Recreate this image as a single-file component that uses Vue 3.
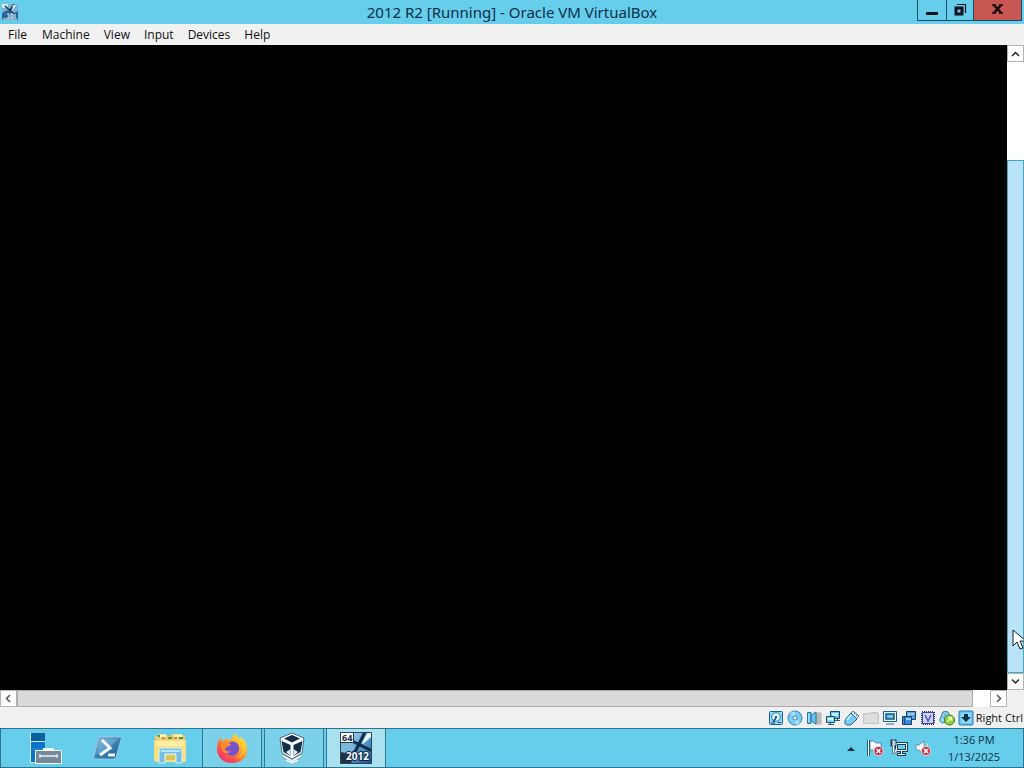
<script setup>
const menus = ['File', 'Machine', 'View', 'Input', 'Devices', 'Help']
const indicators = [
  { id: 'disk', label: 'Hard disks' },
  { id: 'optical', label: 'Optical drives' },
  { id: 'audio', label: 'Audio' },
  { id: 'network', label: 'Network' },
  { id: 'usb', label: 'USB devices' },
  { id: 'folder', label: 'Shared folders' },
  { id: 'display', label: 'Display' },
  { id: 'windows', label: 'Recording' },
  { id: 'cpu', label: 'Processor' },
  { id: 'mouse', label: 'Mouse integration' },
  { id: 'key', label: 'Keyboard capture' }
]
const apps = [
  { id: 'server', label: 'Server Manager', state: '' },
  { id: 'shell', label: 'Windows PowerShell', state: '' },
  { id: 'files', label: 'File Explorer', state: '' },
  { id: 'firefox', label: 'Firefox', state: 'open' },
  { id: 'vbox', label: 'Oracle VM VirtualBox', state: 'open' },
  { id: 'vm', label: '2012 R2 [Running]', state: 'active' }
]
</script>

<template>
  <div class="desktop">
    <header class="titlebar">
      <svg class="app-icon" viewBox="0 0 16 16" aria-hidden="true">
        <rect width="16" height="16" fill="#7fb2d2" />
        <path d="M0 16V9l5-3 5 4 6-3v9z" fill="#2a689c" />
        <path d="M0 0h6v4H0z" fill="#d5e7f2" />
        <path d="M3 2l9 8M12 0L7 8" stroke="#17385f" stroke-width="1.6" />
        <path d="M11 1l3 0-4 6" fill="#dff1fa" />
        <path d="M5 10h2v4H5m4-4h2v4H9zM13 10v4M1 15h14" fill="none" stroke="#e8f2f8" />
      </svg>
      <h1 class="title">2012 R2 [Running] - Oracle VM VirtualBox</h1>
      <div class="controls">
        <button class="control" aria-label="Minimize">
          <svg width="14" height="14" viewBox="0 0 14 14"><path d="M1 9h12v3H1z" fill="#06121c" /></svg>
        </button>
        <button class="control restore" aria-label="Restore">
          <svg width="14" height="14" viewBox="0 0 14 14">
            <path d="M4 1.500h8.500V10" fill="none" stroke="#06121c" stroke-width="1.200" />
            <path d="M3 5h6v6H3z" fill="none" stroke="#06121c" stroke-width="3" />
          </svg>
        </button>
        <button class="control close" aria-label="Close">
          <svg width="14" height="14" viewBox="0 0 14 14">
            <path d="M3 2l7 8M10 2l-7 8" stroke="#16090c" stroke-width="2.600" />
            <path d="M1 2h4M8 2h4M1 10h4M8 10h4" stroke="#16090c" stroke-width="1.500" />
          </svg>
        </button>
      </div>
    </header>

    <nav class="menubar">
      <button v-for="m in menus" :key="m" class="menu">{{ m }}</button>
    </nav>

    <main class="viewer">
      <div class="screen"></div>
      <div class="vscroll">
        <button class="arrow" aria-label="Scroll up">
          <svg width="9" height="7" viewBox="0 0 9 7"><path d="M1 6L4.500 2.500 8 6" /></svg>
        </button>
        <div class="vtrack"><div class="vthumb"></div></div>
        <button class="arrow" aria-label="Scroll down">
          <svg width="9" height="7" viewBox="0 0 9 7"><path d="M1 1.500L4.500 5 8 1.500" /></svg>
        </button>
        <svg class="pointer" width="14" height="22" viewBox="0 0 14 22" aria-hidden="true">
          <path d="M1 1v16l4-4 3 7 3-1-3-7h6z" fill="#fff" stroke="#17222b" />
        </svg>
      </div>
    </main>

    <div class="hscroll">
      <button class="arrow" aria-label="Scroll left">
        <svg width="7" height="9" viewBox="0 0 7 9"><path d="M5 1L1.500 4.500 5 8" /></svg>
      </button>
      <div class="htrack"><div class="hthumb"></div></div>
      <button class="arrow" aria-label="Scroll right">
        <svg width="7" height="9" viewBox="0 0 7 9"><path d="M2 1l3.500 3.500L2 8" /></svg>
      </button>
    </div>

    <footer class="statusbar">
      <svg v-for="i in indicators" :key="i.id" class="indicator" viewBox="0 0 16 16" role="img" :aria-label="i.label">
        <g v-if="i.id === 'disk'">
          <rect x="1.500" y="1.500" width="13" height="13" rx="1" fill="#8fd6f8" stroke="#21618c" />
          <circle cx="8" cy="7" r="4.300" fill="#e8f8ff" stroke="#277cae" />
          <circle cx="8" cy="7" r="1.300" fill="#1e6c9b" />
          <path d="M8 8l-3 4" stroke="#194d71" stroke-width="1.500" />
          <path d="M3 13h4M10 12.500h3" stroke="#194d71" />
        </g>
        <g v-else-if="i.id === 'optical'">
          <circle cx="8" cy="8" r="7" fill="#7ccdf6" stroke="#2b82b8" />
          <path d="M8 8L3 3a7 7 0 0 1 5-1.500zM8 8l5 5a7 7 0 0 1-5 1.500z" fill="#a5e0fb" />
          <circle cx="8" cy="8" r="2" fill="#f1fbff" stroke="#3a8abb" />
        </g>
        <g v-else-if="i.id === 'audio'">
          <path d="M9 3h6v11H9z" fill="#d4d4d2" stroke="#aaa" />
          <path d="M11 4v9M13 4v9" stroke="#9a9a9a" />
          <path d="M1.500 2.500H5v11H1.500zM5 5l5-3v12l-5-3z" fill="#69c4ef" stroke="#2577a9" />
          <path d="M3 4v8" stroke="#c9f1ff" />
        </g>
        <g v-else-if="i.id === 'network'">
          <path d="M5.500 1.500h9v7h-9z" fill="#5fc1ef" stroke="#174a70" />
          <path d="M7 3h6v3H7z" fill="#c2efff" />
          <path d="M10 10.500h5M12.500 9v2" stroke="#28557a" fill="none" />
          <path d="M1.500 6.500h8v6h-8z" fill="#82d6f7" stroke="#174a70" />
          <path d="M3 8h5v2H3z" fill="#e0f8ff" />
          <path d="M3 14.500h6M5.500 13v2" stroke="#28557a" />
        </g>
        <g v-else-if="i.id === 'usb'">
          <path d="M9 1l6 5-3 3-6-5z" fill="#dceef5" stroke="#55738a" />
          <path d="M7 3l6 6-5 5c-2 1.500-5 1.500-6.500 0s-.5-4 1-6z" fill="#78caf2" stroke="#25648e" />
          <path d="M7 5l-4 5" stroke="#d2f4ff" stroke-width="1.500" />
          <path d="M10 3l1 1M12 5l1 1" stroke="#426b86" />
        </g>
        <g v-else-if="i.id === 'folder'">
          <path d="M.5 3.500h6l1-1h7l1 1v10H.5z" fill="#d9d9d9" stroke="#c4c4c4" />
          <path d="M2 5h12v7H2z" fill="#dedede" />
        </g>
        <g v-else-if="i.id === 'display'">
          <path d="M1.500 1.500h13v10h-13z" fill="#e9f9ff" stroke="#1b5f8b" />
          <path d="M4 4h8v5H4z" fill="#64c7f7" stroke="#175279" stroke-width="1.500" />
          <path d="M4 14h8" stroke="#3e6f90" />
        </g>
        <g v-else-if="i.id === 'windows'">
          <path d="M5.500 1.500h9v8h-9z" fill="#58a2df" stroke="#183d7b" />
          <path d="M7 3h2v3H7zM10 3h3v2h-3z" fill="#a6d4f7" />
          <path d="M1.500 6.500h9v8h-9z" fill="#3b8cd8" stroke="#163e80" />
          <path d="M5 8h5v2H5z" fill="#91cff7" />
          <path d="M3.500 6v8" stroke="#1e4a8c" />
        </g>
        <g v-else-if="i.id === 'cpu'">
          <path d="M2 2h12v12H2z" fill="none" stroke="#312d86" stroke-width="2" stroke-dasharray="1 1" />
          <path d="M2.500 2.500h11v11h-11z" fill="#ced4fb" stroke="#4744a0" />
          <path d="M5 5l3 6 3-6" fill="none" stroke="#5655b8" stroke-width="1.500" />
        </g>
        <g v-else-if="i.id === 'mouse'">
          <path d="M4 2c4-2 7 1 6 4l-3 6c-3 2-7 0-6-3z" fill="#94d8f4" stroke="#2b7196" />
          <path d="M3 7l5 2M7 2L5 7" stroke="#5aa5c8" />
          <circle cx="10.500" cy="10" r="5" fill="#8fd142" stroke="#397d26" />
          <path d="M8 12l4-4M9 7.500h3.500V11" stroke="#efffb0" fill="none" stroke-width="1.500" />
        </g>
        <g v-else>
          <rect x="1" y="1" width="14" height="14" rx="1" fill="#70c6f2" stroke="#277baa" />
          <path d="M3 3h10v10H3z" fill="#8ed9fa" />
          <path d="M6 4h4v3h3l-5 5-5-5h3z" fill="#10364f" />
        </g>
      </svg>
      <span class="hostkey">Right Ctrl</span>
    </footer>

    <div class="taskbar">
      <div class="apps">
        <button v-for="a in apps" :key="a.id" class="task" :class="a.state" :aria-label="a.label">
          <svg v-if="a.id === 'server'" class="task-icon" viewBox="0 0 32 32">
            <path d="M1 1h14v29H1z" fill="#0c74c4" />
            <path d="M1 1h14v8H1z" fill="#0d5f9c" />
            <path d="M1 9.500h14" stroke="#c8effa" />
            <path d="M1 17h14" stroke="#2794cf" />
            <path d="M.5 1v29.500h4" fill="none" stroke="#c5edf9" />
            <path d="M14 19v-2h9v2" fill="none" stroke="#edfaff" stroke-width="2" />
            <path d="M5.500 18.500h26v13h-26z" fill="#75899a" stroke="#f0faff" />
            <path d="M9 24h19" stroke="#e9f5fa" stroke-width="1.500" />
            <path d="M10 22v4M27 22v4" stroke="#e9f5fa" />
          </svg>
          <svg v-else-if="a.id === 'shell'" class="task-icon" viewBox="0 0 32 32">
            <defs><linearGradient id="shell" y2="1"><stop stop-color="#82b9df" /><stop offset=".5" stop-color="#3b84b5" /><stop offset="1" stop-color="#1c5690" /></linearGradient></defs>
            <path d="M7 5h21c1 0 2 1 1 3l-5 17c0 1-1 2-3 2H4c-2 0-3-1-2-3L6 7c0-1 0-2 1-2z" fill="url(#shell)" stroke="#9cc9e3" />
            <path d="M7 7h19L13 21l-8 1z" fill="#9ec8e1" opacity=".35" />
            <path d="M10 8l8 8-10 7M16 23h7" fill="none" stroke="#f1fbff" stroke-width="3" />
          </svg>
          <svg v-else-if="a.id === 'files'" class="task-icon" viewBox="0 0 32 32">
            <path d="M1 4h3V2h9v2h4V2h12v2h2v24H1z" fill="#e6cc72" />
            <path d="M6 4h6M20 4h8" stroke="#fff8ba" stroke-width="3" />
            <path d="M4 4h2M14 6h4M25 6h4" stroke="#538e45" stroke-width="2" />
            <path d="M8 6h3M20 6h3" stroke="#df8845" stroke-width="2" />
            <path d="M0 8h32v20c0 2-1 2-3 2H3c-2 0-3-1-3-3z" fill="#f6df83" />
            <path d="M2 9h28v5H2z" fill="#fdeea2" />
            <path d="M5 31V19c0-2 1-3 3-3h17c2 0 3 1 3 3v12h-6v-9H11v9z" fill="#75bfe3" stroke="#d8f5fd" />
            <path d="M7 19h19" stroke="#b8e7f7" stroke-width="2" />
            <path d="M12 23h9v5h-9z" fill="#dbc55f" />
          </svg>
          <svg v-else-if="a.id === 'firefox'" class="task-icon" viewBox="0 0 32 32">
            <defs><linearGradient id="fox" x1="1" x2=".2" y2="1"><stop stop-color="#fff14e" /><stop offset=".35" stop-color="#ffbd29" /><stop offset=".65" stop-color="#ff7439" /><stop offset="1" stop-color="#ed2371" /></linearGradient></defs>
            <path d="M5 5l1 5 5-4 2 3c3-2 4-6 6-8 1 3 3 4 5 6l1-2c5 4 6 8 6 13 0 8-6 13-15 13S1 25 1 17c0-5 1-9 4-12z" fill="url(#fox)" />
            <path d="M4 10c-2 7-1 14 6 18 5 3 11 2 15-1-8 3-15 0-17-6-1-3 0-5 2-6z" fill="#ff4260" opacity=".75" />
            <path d="M12 11c6-4 12 0 11 7-1 5-8 8-12 4-3-3-2-6 0-8l4-1z" fill="#7652cb" />
            <path d="M5 10c4-2 8 0 10 3-3 0-3 3-7 3 1 3 4 4 7 3-2 3-7 3-9-1-2-3-2-5-1-8z" fill="#ff8d2c" />
            <path d="M19 1c1 6 9 8 8 17-1 4-3 7-7 8 10-1 12-13 5-19l-1 2c-1-3-4-4-5-8z" fill="#ffd23c" />
          </svg>
          <svg v-else-if="a.id === 'vbox'" class="task-icon" viewBox="0 0 32 32">
            <path d="M4 24l10-3 10 3v2l-10 6-10-6z" fill="#8fa6b6" />
            <path d="M5 24l9 5 9-5M8 28l6 3 6-3" fill="none" stroke="#f1fafe" stroke-width="1.500" />
            <path d="M2 6l12-5 12 5-2 15-10 6-10-6z" fill="#f5fbfd" stroke="#4f6b82" />
            <path d="M6 6.500L14 3l8 3.500-8 4z" fill="#152c45" />
            <path d="M3.500 9l9 4v11L5.500 20zM24.500 9l-9 4v11l7-4z" fill="#152c45" />
            <path d="M8 20l4.500-3v7zM20 20l-4.500-3v7z" fill="#d9e8f0" />
          </svg>
          <svg v-else class="task-icon" viewBox="0 0 32 32">
            <defs><linearGradient id="vm" y2="1"><stop stop-color="#d5ecf6" /><stop offset=".5" stop-color="#5aa3d6" /><stop offset="1" stop-color="#134c86" /></linearGradient></defs>
            <rect width="32" height="32" fill="url(#vm)" />
            <path d="M0 20c6 0 10 4 12 12H0z" fill="#22303f" />
            <path d="M0 11h11l6 7-5 6-6-5-6-1z" fill="#7cb8dd" />
            <path d="M12 9l20 10M25 0l-9 18-6 6" fill="none" stroke="#122c46" stroke-width="3" />
            <path d="M28 0h3v5l-8 7-1-1z" fill="#e6f5fb" />
            <path d="M.5 .5h13v10H.5z" fill="#fff" stroke="#253846" />
            <text x="2" y="9" class="bits">64</text>
            <text x="6" y="28" class="release">2012</text>
            <path d="M.5 .5h31v31H.5z" fill="none" stroke="#2b455a" />
          </svg>
        </button>
      </div>

      <div class="tray">
        <button class="tray-button" aria-label="Show hidden icons">
          <svg width="8" height="5" viewBox="0 0 8 5"><path d="M0 5l4-4 4 4z" fill="#0b2c41" /></svg>
        </button>
        <button class="tray-button" aria-label="Action Center">
          <svg width="18" height="18" viewBox="0 0 18 18">
            <path d="M2.500 1v16" stroke="#163b5b" stroke-width="2.500" />
            <path d="M2.500 1v16" stroke="#eefaff" />
            <path d="M4 2h4l2 2h5v7H4z" fill="#f4fcff" stroke="#29536c" stroke-width=".6" />
            <circle cx="12.500" cy="12" r="4.600" fill="#c82b3b" stroke="#f6d4d7" />
            <path d="M10.500 10l4 4M14.500 10l-4 4" stroke="#fff" stroke-width="1.700" />
          </svg>
        </button>
        <button class="tray-button" aria-label="Network">
          <svg width="18" height="18" viewBox="0 0 18 18">
            <path d="M6.500 4.500h10v7h-10z" fill="#6acceb" stroke="#183d61" stroke-width="3" />
            <path d="M11.500 12v3M7 15.500h9" fill="none" stroke="#183d61" stroke-width="3" />
            <path d="M6.500 4.500h10v7h-10zM11.500 12v3M8 15.500h7" fill="none" stroke="#f3fcff" />
            <path d="M1.500 1.500h4v5h-4zM3.500 7v7h4" fill="#c8eefa" stroke="#183d61" stroke-width="2" />
            <path d="M2 2h3v4H2M3.500 6v8h4" fill="none" stroke="#fff" />
          </svg>
        </button>
        <button class="tray-button" aria-label="Volume muted">
          <svg width="18" height="18" viewBox="0 0 18 18">
            <path d="M2 6h3l5-4v13l-5-4H2z" fill="#f3fcff" stroke="#55717f" stroke-width=".7" />
            <path d="M12 4c2 2 2 4 1 6" fill="none" stroke="#e2f7fc" />
            <circle cx="12" cy="12" r="4.600" fill="#ca3541" stroke="#f4ccd0" />
            <path d="M10 10l4 4M14 10l-4 4" stroke="#fff" stroke-width="1.700" />
          </svg>
        </button>
        <button class="clock"><span>1:36 PM</span><span>1/13/2025</span></button>
      </div>
    </div>
  </div>
</template>

<style>
body { margin: 0; }
</style>

<style scoped>
.desktop {
  display: flex;
  flex-direction: column;
  height: 100vh;
  overflow: hidden;
  background: #f0f0f0;
  color: #101010;
  font: 12px/16px "Noto Sans", "Open Sans", sans-serif;
}
button { margin: 0; padding: 0; border: 0; background: none; color: inherit; font: inherit; }
svg { display: block; flex: none; }
.titlebar {
  display: grid;
  grid-template-columns: 107px 1fr 107px;
  align-items: start;
  height: 24px;
  flex: none;
  background: #66cdeb;
}
.app-icon { width: 16px; height: 16px; margin: 4px 2px; }
.title { margin: 0; color: #092f48; font: 15px/24px "Noto Sans", sans-serif; text-align: center; white-space: nowrap; }
.controls { display: flex; height: 20px; border: 1px solid #174c65; border-top: 0; margin-right: 2px; }
.control { display: grid; place-items: center; width: 28px; }
.restore { border: solid #174c65; border-width: 0 1px; }
.close { flex: 1; background: #c75750; }
.menubar { display: flex; flex: none; height: 21px; background: #f2f1f1; }
.menu { padding: 0 6px 0 8px; font: 12px/21px "Open Sans", sans-serif; }
.menu:first-child { padding-right: 7px; }
.viewer { display: flex; flex: 1; min-height: 0; }
.screen { flex: 1; background: #000; }
.vscroll { position: relative; display: flex; flex-direction: column; width: 17px; background: #fff; }
.arrow { display: grid; place-items: center; flex: none; width: 17px; height: 17px; border: 1px solid #b4b4b4; background: #fff; }
.arrow path { fill: none; stroke: #252525; stroke-width: 1.500; }
.hscroll .arrow path { stroke: #555; }
.vtrack { display: flex; flex: 1; align-items: flex-end; }
.vthumb { width: 100%; height: 84%; box-sizing: border-box; border: 1px solid #42a7bd; background: #b9e3f8; }
.pointer { position: absolute; left: 5px; bottom: 39px; }
.hscroll { display: flex; flex: none; width: calc(100% - 17px); height: 17px; background: #fff; }
.htrack { flex: 1; padding-right: 17px; }
.hthumb { height: 17px; box-sizing: border-box; border: 1px solid #a9a9a9; background: #dadada; }
.statusbar { display: flex; align-items: center; justify-content: flex-end; gap: 3px; flex: none; height: 21px; padding-right: 1px; }
.indicator { width: 16px; height: 16px; }
.hostkey { margin-left: -1px; font: 11px/20px "Open Sans", sans-serif; white-space: nowrap; }
.taskbar { display: flex; justify-content: space-between; flex: none; height: 40px; box-sizing: border-box; border: 1px solid #2b7490; background: #66cdeb; }
.apps { display: flex; gap: 2px; padding-left: 15px; }
.task { display: grid; place-items: center; width: 60px; box-sizing: border-box; border: 1px solid transparent; border-width: 0 1px; }
.task-icon { width: 32px; height: 32px; }
.open { border-color: #307994; background: #7bd1e9; }
.active { border-color: #307994; background: #a9e1ef; }
.bits { fill: #172b3a; font: bold 9px "Open Sans", sans-serif; }
.release { fill: #fff; stroke: #102b45; stroke-width: 2px; paint-order: stroke; font: bold 10px "Open Sans", sans-serif; }
.tray { display: flex; align-items: center; gap: 6px; color: #092f48; }
.tray-button { display: grid; place-items: center; width: 18px; height: 24px; }
.clock { display: flex; flex-direction: column; align-items: center; width: 68px; margin: 0 15px 0 2px; font: 11px/17px "Open Sans", sans-serif; }
</style>
